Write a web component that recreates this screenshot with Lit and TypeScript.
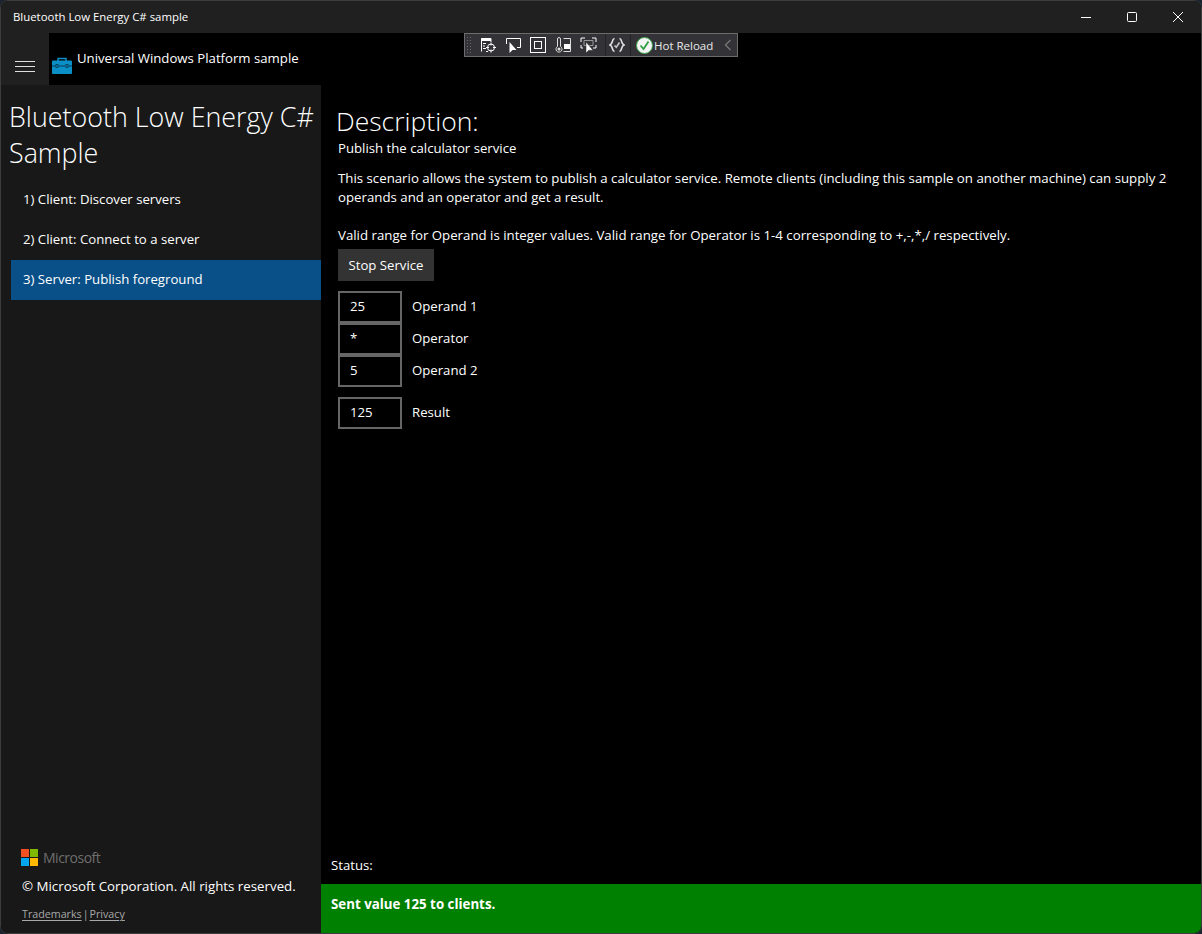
import { LitElement, html, css, svg } from "lit";
import { customElement } from "lit/decorators.js";

const menuItems = [
  { label: "1) Client: Discover servers", active: false },
  { label: "2) Client: Connect to a server", active: false },
  { label: "3) Server: Publish foreground", active: true },
];

const fields = [
  { value: "25", label: "Operand 1" },
  { value: "*", label: "Operator" },
  { value: "5", label: "Operand 2" },
];

const toolIcons = [
  svg`<path d="M1.500 14.500V1.500H11V5M1.500 3.500H11M3 6.500H6M3 9H5M3 11.500H6M6 14.500H8" fill="none" stroke="#fff"/><path d="M1.500 2H11" stroke="#fff" stroke-width="2"/><circle cx="11" cy="10.500" r="3.500" fill="none" stroke="#fff"/><path d="M11 5.500V8.500M11 12.500V15.500M6 10.500H9M13 10.500H16" stroke="#fff"/>`,
  svg`<path d="M1.500 7V1.500H15.500V10.500H12" fill="none" stroke="#fff"/><path d="M4.500 5V16L7.500 13H11.500Z" fill="#fff"/>`,
  svg`<rect x="0.500" y="0.500" width="15" height="15" fill="none" stroke="#fff"/><rect x="4.500" y="4.500" width="7" height="7" fill="none" stroke="#fff"/>`,
  svg`<path d="M2.500 9.500V2A1.500 1.500 0 0 1 5.500 2V9.500A3 3 0 1 1 2.500 9.500Z" fill="none" stroke="#ddd"/><circle cx="4" cy="12" r="1.500" fill="#ddd"/><path d="M8.500 1.500H15.500V14.500H8.500" fill="none" stroke="#ddd"/><rect x="9" y="7" width="6" height="5" fill="#fff"/>`,
  svg`<path d="M1 5V1H5M12 1H16V5M1 8V11H3M16 8V11H13" fill="none" stroke="#fff"/><path d="M4 3.500H13V8.500H4Z" fill="none" stroke="#999"/><path d="M6 5V16L8.800 13.200H13Z" fill="#fff" stroke="#333" stroke-width="0.500"/>`,
  svg`<path d="M5.500 1.500C2.500 2 4.500 6.500 1 8C4.500 9.500 2.500 14 5.500 14.500M10.500 1.500C13.500 2 11.500 6.500 15 8C11.500 9.500 13.500 14 10.500 14.500" fill="none" stroke="#e0e0e0" stroke-width="1.600"/><path d="M5.500 8.500L7.300 10.300L10.500 5.500" fill="none" stroke="#c4c4c4" stroke-width="1.600"/>`,
];

@customElement("hot-reload-bar")
class HotReloadBar extends LitElement {
  static styles = css`
    :host {
      position: absolute;
      left: 463px;
      top: 32px;
      width: 274px;
      height: 24px;
      box-sizing: border-box;
      display: flex;
      align-items: center;
      background: #333337;
      border: 1px solid #6b6b6b;
      font-family: "Open Sans", "Noto Sans", sans-serif;
    }
    .grip {
      width: 6px;
      height: 18px;
      margin: 0 8px 0 1px;
      background-image: radial-gradient(#6a6a6a 0.7px, transparent 0.8px);
      background-size: 3px 3px;
    }
    .tool {
      width: 17px;
      height: 17px;
      margin-right: 8px;
      flex: none;
    }
    .sep {
      width: 1px;
      height: 22px;
      background: #232323;
      flex: none;
    }
    .spec {
      width: 16px;
      height: 16px;
      margin: 0 5px 0 3px;
      flex: none;
    }
    .check {
      width: 17px;
      height: 17px;
      margin: 0 1px 0 5px;
      flex: none;
    }
    .text {
      color: #e8e8e8;
      font-size: 11.500px;
      white-space: nowrap;
    }
    .chev {
      width: 8px;
      height: 12px;
      margin-left: 11px;
      flex: none;
    }
  `;

  render() {
    return html`
      <div class="grip"></div>
      ${toolIcons.slice(0, 5).map(
        (icon) => html`<svg class="tool" viewBox="0 0 17 17">${icon}</svg>`
      )}
      <div class="sep"></div>
      <svg class="spec" viewBox="0 0 16 16">${toolIcons[5]}</svg>
      <div class="sep"></div>
      <svg class="check" viewBox="0 0 17 17">
        <circle cx="8.500" cy="8.500" r="8" fill="#f4f4f4" stroke="#3aa648" stroke-width="1"/>
        <path d="M4.500 8.500L7.500 12L12.500 4.500" fill="none" stroke="#2f9e41" stroke-width="1.800"/>
      </svg>
      <span class="text">Hot Reload</span>
      <svg class="chev" viewBox="0 0 8 12">
        <path d="M6.500 1L1.500 6L6.500 11" fill="none" stroke="#777" stroke-width="1.300"/>
      </svg>
    `;
  }
}

@customElement("app-root")
class AppRoot extends LitElement {
  static styles = css`
    :host {
      display: block;
      width: 1202px;
      height: 934px;
      background: #1c2430;
      font-family: "Open Sans", "Noto Sans", sans-serif;
      font-size: 13.200px;
      color: #fff;
    }
    .window {
      position: relative;
      width: 100%;
      height: 100%;
      box-sizing: border-box;
      display: flex;
      flex-direction: column;
      background: #000;
      border: 1px solid #3c3c3c;
      border-radius: 8px;
      overflow: hidden;
    }
    .titlebar {
      height: 32px;
      flex: none;
      display: flex;
      align-items: center;
      background: #202020;
      padding-left: 12px;
      font-size: 11.400px;
    }
    .titlebar span {
      margin-bottom: 2px;
    }
    .caption {
      margin-left: auto;
      display: flex;
    }
    .caption svg {
      width: 46px;
      height: 32px;
      display: block;
    }
    .header {
      height: 52px;
      flex: none;
      display: flex;
    }
    .burger {
      width: 48px;
      background: #202020;
      display: flex;
      align-items: center;
      justify-content: center;
    }
    .burger svg {
      width: 20px;
      height: 12px;
      margin-top: 13px;
      margin-right: 1px;
    }
    .brand {
      display: flex;
      align-items: flex-start;
      margin-left: 3px;
    }
    .brand svg {
      width: 20px;
      height: 17px;
      margin-top: 24px;
    }
    .brand span {
      margin-left: 5px;
      margin-top: 15px;
      line-height: 20px;
    }
    .main {
      flex: 1;
      display: flex;
      min-height: 0;
    }
    .side {
      width: 320px;
      flex: none;
      display: flex;
      flex-direction: column;
      background: #181818;
    }
    .side h1 {
      margin: 14px 0 9px 8px;
      font-size: 26.850px;
      line-height: 36px;
      font-weight: 300;
      width: 312px;
    }
    .item {
      height: 40px;
      margin-left: 10px;
      padding: 0 0 2px 12px;
      box-sizing: border-box;
      display: flex;
      align-items: center;
    }
    .item.active {
      background: #0a5088;
    }
    .foot {
      margin-top: auto;
      padding: 0 0 11px 20px;
    }
    .ms {
      display: flex;
      align-items: center;
      height: 18px;
      color: #6e6e6e;
      font-size: 14px;
      letter-spacing: -0.5px;
    }
    .ms svg {
      width: 17px;
      height: 17px;
      margin-right: 5px;
    }
    .copy {
      margin: 10px 0 0 1px;
      line-height: 20px;
      font-size: 13.300px;
    }
    .links {
      margin: 10px 0 0 1px;
      color: #a8a8a8;
      font-size: 10.700px;
      line-height: 16px;
      display: flex;
    }
    .links u {
      text-underline-offset: 2px;
    }
    .links span {
      margin: 0 1px;
    }
    .content {
      flex: 1;
      display: flex;
      flex-direction: column;
      min-width: 0;
    }
    .scroll {
      flex: 1;
      padding: 20px 30px 0 17px;
    }
    h2 {
      margin: 0 0 0 -2px;
      font-size: 26.500px;
      line-height: 32px;
      font-weight: 300;
    }
    p {
      margin: 0;
      line-height: 19px;
    }
    .sub {
      margin-top: 2px;
    }
    .desc {
      margin-top: 11px;
      font-size: 13.250px;
    }
    .desc + .desc {
      margin-top: 19px;
    }
    .btn {
      margin-top: 4px;
      width: 96px;
      height: 32px;
      background: #333;
      display: flex;
      align-items: center;
      justify-content: center;
    }
    .fields {
      margin-top: 10px;
      display: flex;
      flex-direction: column;
    }
    .row {
      display: flex;
      align-items: center;
      height: 32px;
    }
    .box {
      width: 64px;
      height: 32px;
      box-sizing: border-box;
      border: 2px solid #666;
      padding: 0 0 2px 10px;
      display: flex;
      align-items: center;
    }
    .label {
      margin: 0 0 2px 10px;
    }
    .result {
      margin-top: 10px;
    }
    .status-label {
      padding-left: 10px;
      height: 29px;
      line-height: 20px;
    }
    .status {
      height: 49px;
      flex: none;
      background: #008000;
      padding: 10px 0 0 10px;
      box-sizing: border-box;
      font-weight: 700;
      font-size: 13.300px;
      line-height: 20px;
    }
  `;

  render() {
    return html`
      <div class="window">
        <div class="titlebar">
          <span>Bluetooth Low Energy C# sample</span>
          <div class="caption">
            <svg viewBox="0 0 46 32"><path d="M18 16.500H28" stroke="#fff"/></svg>
            <svg viewBox="0 0 46 32"><rect x="18.500" y="11.500" width="9" height="9" rx="1" fill="none" stroke="#fff"/></svg>
            <svg viewBox="0 0 46 32"><path d="M18 11L28 21M28 11L18 21" stroke="#fff"/></svg>
          </div>
        </div>
        <div class="header">
          <div class="burger">
            <svg viewBox="0 0 20 12">
              <path d="M0 1.500H20M0 6.500H20M0 11.500H20" stroke="#e0e0e0"/>
            </svg>
          </div>
          <div class="brand">
            <svg viewBox="0 0 20 17">
              <path d="M6 4V1.500H14V4" fill="none" stroke="#0a8fc6" stroke-width="1.500"/>
              <rect x="0" y="3.500" width="20" height="13.500" rx="1" fill="#0a8fc6"/>
              <path d="M0 9H20" stroke="#063c55"/>
              <rect x="4" y="7.500" width="2" height="3" fill="#0a8fc6" stroke="#063c55" stroke-width="0.800"/>
              <rect x="14" y="7.500" width="2" height="3" fill="#0a8fc6" stroke="#063c55" stroke-width="0.800"/>
            </svg>
            <span>Universal Windows Platform sample</span>
          </div>
        </div>
        <div class="main">
          <div class="side">
            <h1>Bluetooth Low Energy C# Sample</h1>
            ${menuItems.map(
              (m) => html`<div class="item ${m.active ? "active" : ""}">${m.label}</div>`
            )}
            <div class="foot">
              <div class="ms">
                <svg viewBox="0 0 17 17">
                  <rect width="8" height="8" fill="#f25022"/>
                  <rect x="9" width="8" height="8" fill="#7fba00"/>
                  <rect y="9" width="8" height="8" fill="#00a4ef"/>
                  <rect x="9" y="9" width="8" height="8" fill="#ffb900"/>
                </svg>
                Microsoft
              </div>
              <div class="copy">© Microsoft Corporation. All rights reserved.</div>
              <div class="links"><u>Trademarks</u><span>|</span><u>Privacy</u></div>
            </div>
          </div>
          <div class="content">
            <div class="scroll">
              <h2>Description:</h2>
              <p class="sub">Publish the calculator service</p>
              <p class="desc">
                This scenario allows the system to publish a calculator service. Remote clients (including this sample on another machine) can supply 2 operands and an operator and get a result.
              </p>
              <p class="desc">
                Valid range for Operand is integer values. Valid range for Operator is 1-4 corresponding to +,-,*,/ respectively.
              </p>
              <div class="btn">Stop Service</div>
              <div class="fields">
                ${fields.map(
                  (f) => html`<div class="row">
                    <div class="box">${f.value}</div>
                    <span class="label">${f.label}</span>
                  </div>`
                )}
                <div class="row result">
                  <div class="box">125</div>
                  <span class="label">Result</span>
                </div>
              </div>
            </div>
            <div class="status-label">Status:</div>
            <div class="status">Sent value 125 to clients.</div>
          </div>
        </div>
        <hot-reload-bar></hot-reload-bar>
      </div>
    `;
  }
}
